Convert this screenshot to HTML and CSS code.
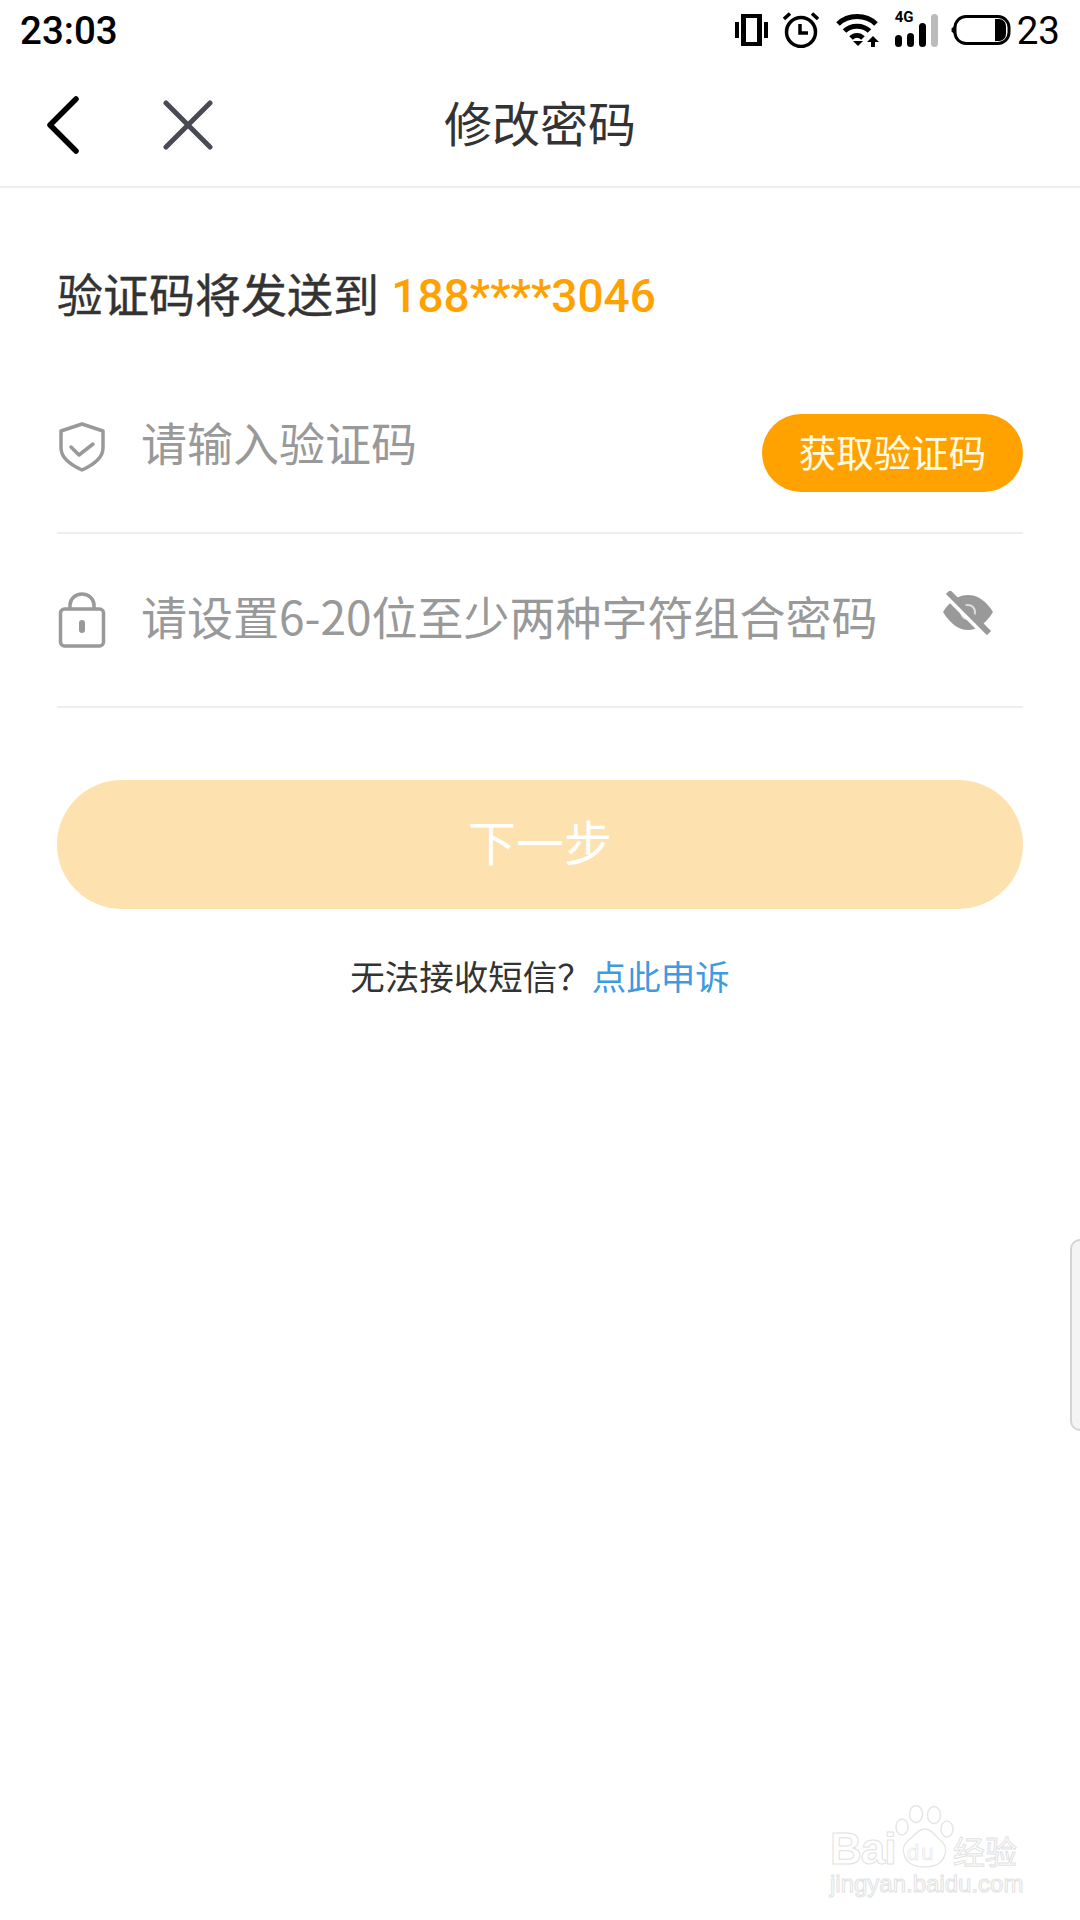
FILE: index.html
```html
<!DOCTYPE html>
<html>
    <head>
        <title>修改密码</title>
        <link rel="stylesheet" href="styles.css">
    </head>
    <body>
        <div class="status-bar">
            <span class="time">23:03</span>
            <div class="status-icons">
                <svg class="icon-vibrate" width="33" height="32" viewBox="0 0 33 32">
                    <rect x="0" y="8" width="4" height="16" fill="#000"/>
                    <rect x="29" y="8" width="4" height="16" fill="#000"/>
                    <rect x="6" y="0" width="21" height="32" fill="#000"/>
                    <rect x="11" y="4" width="11" height="24" fill="#fff"/>
                </svg>
                <svg class="icon-alarm" width="36" height="36" viewBox="0 0 36 36">
                    <circle cx="18" cy="20" r="14.500" fill="none" stroke="#000" stroke-width="3.500"/>
                    <path d="M17 12v9h8" fill="none" stroke="#000" stroke-width="3.500"/>
                    <path d="M1 7L7 1.500M35 7L29 1.500" fill="none" stroke="#000" stroke-width="3.500"/>
                </svg>
                <svg class="icon-wifi" width="44" height="34" viewBox="0 0 44 34">
                    <path d="M2 11C12 1 30 1 40 11M8.500 18C15 11.500 27 11.500 33.500 18M15 25C18.500 21.500 23.500 21.500 27 25" fill="none" stroke="#000" stroke-width="5"/>
                    <path d="M17 28h10l-5 5z" fill="#000"/>
                    <path d="M37 23l6 6h-4v5h-4v-5h-4z" fill="#000"/>
                </svg>
                <div class="signal">
                    <span class="signal-label">4G</span>
                    <svg width="44" height="33" viewBox="0 0 44 33">
                        <rect x="0" y="21" width="7" height="12" rx="3.500" fill="#000"/>
                        <rect x="12" y="19" width="7" height="14" rx="3.500" fill="#000"/>
                        <rect x="24" y="9" width="7" height="24" rx="3.500" fill="#000"/>
                        <rect x="36" y="0" width="7" height="33" rx="3.500" fill="#bbb"/>
                    </svg>
                </div>
                <svg class="icon-battery" width="60" height="30" viewBox="0 0 60 30">
                    <path d="M1 15l3-3M1 15l3 3" stroke="#000" stroke-width="2.500"/>
                    <rect x="4" y="1.500" width="54" height="27" rx="11" fill="none" stroke="#000" stroke-width="3"/>
                    <path d="M44 4h4a7 7 0 0 1 7 7v8a7 7 0 0 1-7 7h-4z" fill="#000"/>
                </svg>
                <span class="battery-num">23</span>
            </div>
        </div>

        <div class="nav-bar">
            <div class="nav-left">
                <svg width="34" height="58" viewBox="0 0 34 58">
                    <path d="M30 3L4 29l26 26" fill="none" stroke="#000" stroke-width="5.500" stroke-linecap="round" stroke-linejoin="round"/>
                </svg>
                <svg width="50" height="50" viewBox="0 0 50 50">
                    <path d="M3 3l44 44M47 3L3 47" fill="none" stroke="#4a4a55" stroke-width="5" stroke-linecap="round"/>
                </svg>
            </div>
            <p class="nav-title">修改密码</p>
        </div>

        <div class="content">
            <p class="send-to">验证码将发送到 <span class="phone">188****3046</span></p>

            <div class="field field-code">
                <svg class="field-icon shield" width="48" height="50" viewBox="0 0 48 50">
                    <path d="M24 2L45 9v17c0 10-10 17-21 22C13 43 3 36 3 26V9z" fill="none" stroke="#999" stroke-width="3.500" stroke-linejoin="round"/>
                    <path d="M13 25l8 8 14-11" fill="none" stroke="#999" stroke-width="3.500" stroke-linecap="round" stroke-linejoin="round"/>
                </svg>
                <span class="placeholder">请输入验证码</span>
                <button class="code-btn">获取验证码</button>
            </div>

            <div class="field field-pass">
                <svg class="field-icon" width="48" height="56" viewBox="0 0 48 56">
                    <path d="M12 16V13a12 11 0 0 1 24 0v3" fill="none" stroke="#999" stroke-width="3.500"/>
                    <rect x="2.500" y="17" width="43" height="37" rx="4" fill="none" stroke="#999" stroke-width="3.500"/>
                    <rect x="21" y="28" width="6" height="13" rx="3" fill="#999"/>
                </svg>
                <span class="placeholder">请设置6-20位至少两种字符组合密码</span>
                <svg class="eye-icon" width="50" height="44" viewBox="0 0 50 44">
                    <path d="M0 21C7 10 15 4 25 4s18 6 25 17c-7 11-15 18-25 18S7 32 0 21z" fill="#999"/>
                    <circle cx="25" cy="21" r="7" fill="none" stroke="#ddd" stroke-width="2"/>
                    <path d="M2 3l41 41" stroke="#fff" stroke-width="6"/>
                    <path d="M5 1l41 41" stroke="#999" stroke-width="6"/>
                </svg>
            </div>

            <button class="next-btn">下一步</button>

            <p class="help">无法接收短信？<span class="help-link">点此申诉</span></p>
        </div>

        <div class="side-tab"></div>

        <div class="watermark">
            <svg class="paw" width="60" height="66" viewBox="0 0 60 66">
                <g fill="#fff" stroke="#e6e6e6" stroke-width="1.500">
                    <ellipse cx="7" cy="22" rx="6" ry="8"/>
                    <ellipse cx="21" cy="9" rx="6.500" ry="8.500"/>
                    <ellipse cx="39" cy="10" rx="6.500" ry="8.500"/>
                    <ellipse cx="52" cy="24" rx="6" ry="8"/>
                    <path d="M30 24c7 0 9 6 14 10 7 5 8 12 5 18-3 7-10 10-19 10s-17-3-20-10c-3-6-2-13 5-18 5-4 8-10 15-10z"/>
                </g>
            </svg>
            <span class="wm-bai">Bai</span>
            <span class="wm-du">du</span>
            <span class="wm-jy">经验</span>
            <span class="wm-url">jingyan.baidu.com</span>
        </div>
    </body>
</html>
```

FILE: styles.css
```css
* {
    box-sizing: border-box;
}
html, body {
    margin: 0;
    height: 1920px;
    background-color: white;
    overflow: hidden;
}
body {
    position: relative;
    width: 1080px;
    font-family: "Noto Sans CJK SC", Roboto, sans-serif;
    color: #333;
}
p {
    margin: 0;
}
.status-bar {
    height: 60px;
    display: flex;
    justify-content: space-between;
    align-items: center;
    padding: 0 20px 0 20px;
    font-family: Roboto, sans-serif;
    color: black;
}
.time {
    font-size: 38.500px;
    font-weight: 500;
}
.status-icons {
    display: flex;
    align-items: center;
    gap: 15px;
}
.icon-wifi {
    margin-left: 2px;
}
.signal {
    position: relative;
    display: flex;
}
.signal-label {
    position: absolute;
    left: 0;
    top: -5px;
    font-size: 15px;
    font-weight: 700;
    line-height: 16px;
}
.icon-battery {
    margin-left: -3px;
}
.battery-num {
    font-size: 38.500px;
    margin-left: -9px;
}
.nav-bar {
    position: relative;
    height: 128px;
    display: flex;
    align-items: center;
    justify-content: center;
    border-bottom: 2px solid #eeeeee;
}
.nav-left {
    position: absolute;
    left: 46px;
    top: 36px;
    display: flex;
    align-items: center;
    gap: 83px;
}
.nav-title {
    font-size: 48px;
    margin-top: -5px;
    color: #333;
}
.content {
    padding: 0 57px;
}
.send-to {
    margin-top: 71px;
    font-size: 46px;
    line-height: 66px;
    -webkit-text-stroke: 0.4px #333;
}
.phone {
    margin-left: 2px;
    font-family: Roboto, sans-serif;
    font-weight: 500;
    color: #ffa200;
    -webkit-text-stroke: 0;
}
.field {
    position: relative;
    display: flex;
    align-items: center;
    height: 174px;
    border-bottom: 2px solid #eeeeee;
}
.field-code {
    margin-top: 31px;
}
.field-icon {
    margin-left: 1px;
    flex-shrink: 0;
}
.shield {
    margin-top: 2px;
}
.placeholder {
    margin-left: 35px;
    margin-bottom: 10px;
    font-size: 46px;
    color: #999;
}
.code-btn {
    margin-left: auto;
    margin-top: 14px;
    width: 261px;
    height: 78px;
    border: none;
    border-radius: 39px;
    background-color: #ffa200;
    color: #fffbe8;
    font-family: inherit;
    font-size: 37.500px;
    padding: 0 0 5px;
}
.eye-icon {
    margin-left: auto;
    margin-right: 30px;
    margin-bottom: 14px;
}
.next-btn {
    display: block;
    width: 966px;
    height: 129px;
    margin-top: 72px;
    border: none;
    border-radius: 65px;
    background-color: #fde2b0;
    color: #fff;
    font-family: inherit;
    font-size: 48px;
    padding: 0 0 9px;
}
.help {
    margin-top: 41px;
    text-align: center;
    font-size: 34.500px;
}
.help-link {
    color: #3f9be0;
}
.side-tab {
    position: absolute;
    left: 1070px;
    top: 1239px;
    width: 10px;
    height: 192px;
    background-color: #f4f4f4;
    border: 2px solid #d4d4d4;
    border-right: none;
    border-radius: 10px 0 0 10px;
}
.watermark {
    position: absolute;
    left: 828px;
    top: 1804px;
    width: 200px;
    color: white;
    font-family: "Liberation Sans", sans-serif;
    -webkit-text-stroke: 1px #e2e2e2;
}
.paw {
    position: absolute;
    left: 67px;
    top: 1px;
}
.wm-bai {
    position: absolute;
    left: 2px;
    top: 20px;
    font-size: 44px;
    font-weight: 700;
    letter-spacing: -1px;
    line-height: 50px;
}
.wm-du {
    position: absolute;
    left: 79px;
    top: 37px;
    font-size: 22px;
    letter-spacing: 2px;
    line-height: 24px;
    -webkit-text-stroke: 0.6px #e2e2e2;
}
.wm-jy {
    position: absolute;
    left: 125px;
    top: 21px;
    font-family: "Noto Sans CJK SC", sans-serif;
    font-size: 32px;
    line-height: 50px;
    white-space: nowrap;
}
.wm-url {
    position: absolute;
    left: 2px;
    top: 66px;
    white-space: nowrap;
    font-size: 24px;
}
```
